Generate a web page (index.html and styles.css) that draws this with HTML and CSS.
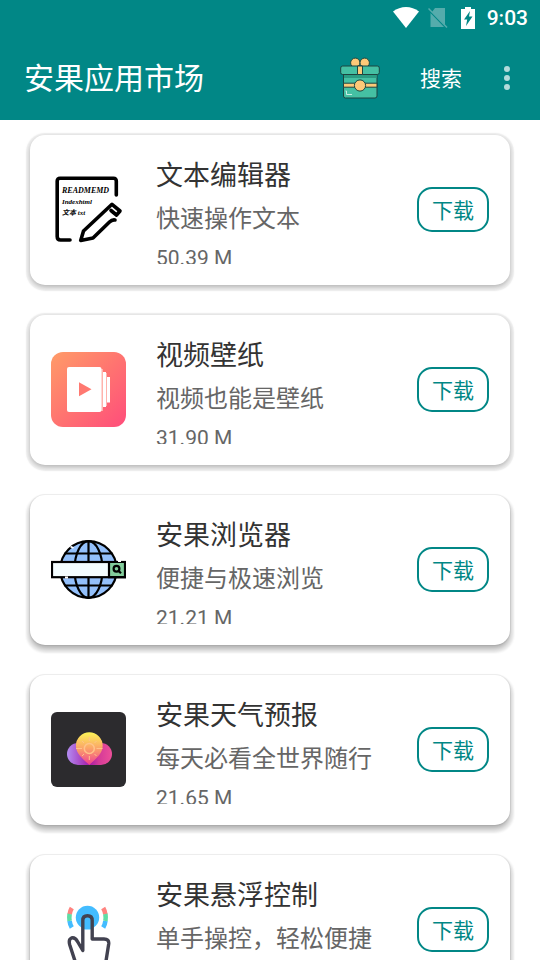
FILE: index.html
```html
<!DOCTYPE html>
<html lang="zh-CN">
<head>
<meta charset="utf-8">
<meta name="viewport" content="width=device-width, initial-scale=1">
<title>安果应用市场</title>
<link rel="stylesheet" href="styles.css">
</head>
<body>
<header class="header">
  <div class="status">
    <svg class="status-wifi" width="26" height="22" viewBox="0 0 26 22"><path d="M0 4.5C7.500-1.500 18.500-1.500 26 4.500L13 21z" fill="#fff"/></svg>
    <svg class="status-sim" width="20" height="22" viewBox="0 0 20 22"><path d="M7 1h10v17L4 5zM2.500 6L16 20H2.500z" fill="#55acac"/><path d="M.5 1.500L19 20.500" stroke="#55acac" stroke-width="1.500"/></svg>
    <svg class="status-battery" width="14" height="22" viewBox="0 0 14 22"><path d="M4 0h6v2h4v20H0V2h4z" fill="#fff"/><path d="M9 4L3 12.500h3.200L5 19 11.500 9.500H8z" fill="#018786"/></svg>
    <span class="clock">9:03</span>
  </div>
  <div class="toolbar">
    <h1 class="app-title">安果应用市场</h1>
    <button class="gift" type="button" aria-label="礼物">
      <svg width="40" height="42" viewBox="0 0 40 42" stroke="#1d4540" stroke-width="1">
        <rect x="3.500" y="16" width="33.500" height="25" rx="2" fill="#45c0a3"/>
        <path d="M4 18h32.500v3H4z" fill="#2a9c83" stroke="none"/>
        <path d="M3.500 26.200H37v4H3.500z" fill="#fdc978"/>
        <circle cx="15.300" cy="5.800" r="4.700" fill="#fdc978"/><circle cx="24.700" cy="5.800" r="4.700" fill="#fdc978"/>
        <rect x=".7" y="9" width="38.600" height="8.500" rx="2" fill="#45c0a3"/>
        <path d="M17.500 9h5v8.500h-5z" fill="#fdc978"/>
        <circle cx="20" cy="28.500" r="5.600" fill="#fdc978"/>
        <path d="M6.500 34v3.500H12M5.500 34h1" fill="none" stroke="#c9efe4"/>
      </svg>
    </button>
    <button class="search" type="button">搜索</button>
    <button class="more" type="button" aria-label="更多">
      <svg width="6" height="24" viewBox="0 0 6 24" fill="#b3dbdb"><circle cx="3" cy="3" r="3"/><circle cx="3" cy="12" r="3"/><circle cx="3" cy="21" r="3"/></svg>
    </button>
  </div>
</header>
<main class="list">
  <article class="card">
    <svg class="icon" viewBox="0 0 75 75">
      <g fill="none" stroke="#000" stroke-width="3.600" stroke-linecap="round" stroke-linejoin="round">
        <path d="M65.300 23V9q0-2.800-2.800-2.800H9Q6.200 6.200 6.200 9v55.500Q6.200 68 9.500 68H19"/>
        <path d="M64 48q-3-.5-5.500 2L42 66l-12.300 2.500L32.500 59 61 32.300 69 39l-3.500 4-5.500-4.500"/>
      </g>
      <g class="icon-script"><text class="icon-script-lead" x="11" y="21">READMEMD</text><text x="11" y="32">Indexhtml</text><text x="11" y="43">文本 txt</text></g>
    </svg>
    <div class="info"><h2 class="name">文本编辑器</h2><p class="desc">快速操作文本</p><p class="size">50.39 M</p></div>
    <button class="download" type="button">下载</button>
  </article>
  <article class="card">
    <svg class="icon" viewBox="0 0 75 75">
      <defs><linearGradient id="coral" x1="0" y1="0" x2="1" y2="1"><stop offset="0" stop-color="#ff9c68"/><stop offset=".5" stop-color="#ff7470"/><stop offset="1" stop-color="#ff4d7b"/></linearGradient></defs>
      <rect width="75" height="75" rx="12" fill="url(#coral)"/>
      <rect x="50" y="17" width="2" height="42" fill="#ffb3ac"/><rect x="54" y="21" width="2" height="33" fill="#ffb3ac"/>
      <rect x="16" y="15" width="34.500" height="45" rx="2" fill="#fff"/>
      <rect x="52" y="20" width="3" height="35" fill="#fff"/><rect x="56" y="25" width="3" height="25.500" fill="#fff"/>
      <path d="M28 30.300L40.500 37.300 28 44.300z" fill="#ff7971"/>
    </svg>
    <div class="info"><h2 class="name">视频壁纸</h2><p class="desc">视频也能是壁纸</p><p class="size">31.90 M</p></div>
    <button class="download" type="button">下载</button>
  </article>
  <article class="card">
    <svg class="icon" viewBox="0 0 75 75">
      <g stroke="#000" stroke-width="2.200" fill="none">
        <circle cx="37.500" cy="37.500" r="28.300" fill="#93c0fb"/>
        <path d="M37.500 9v57M13.500 21.500h48M13.500 53.500h48"/><ellipse cx="37.500" cy="37.500" rx="14" ry="28.300"/>
        <rect x="1" y="30" width="73" height="15.200" fill="#f4fdff"/>
        <path d="M58 30h16v15.200H58z" fill="#83cd9b"/>
        <circle cx="65.500" cy="36.700" r="2.900"/><path d="M67.500 38.700l2.500 2.500"/>
      </g>
      <path d="M19.500 14.500l3 1.500M14 45.500h3M67 29h3" stroke="#fff" stroke-width="1.800"/>
    </svg>
    <div class="info"><h2 class="name">安果浏览器</h2><p class="desc">便捷与极速浏览</p><p class="size">21.21 M</p></div>
    <button class="download" type="button">下载</button>
  </article>
  <article class="card">
    <svg class="icon" viewBox="0 0 75 75">
      <defs>
        <linearGradient id="cloud"><stop offset="0" stop-color="#b38df3"/><stop offset=".5" stop-color="#a31ba8"/><stop offset=".7" stop-color="#d43a98"/><stop offset="1" stop-color="#ed4f99"/></linearGradient>
        <linearGradient id="sunpin" x1="0" y1="0" x2="0" y2="1"><stop offset="0" stop-color="#fcf456"/><stop offset=".5" stop-color="#fba269"/><stop offset="1" stop-color="#f03d91"/></linearGradient>
      </defs>
      <rect width="75" height="75" rx="6" fill="#2c2b2e"/>
      <rect x="16" y="31" width="45" height="22" rx="11" fill="url(#cloud)"/>
      <path d="M38.300 20.300a13.400 13.400 0 0 1 13.400 13.400c0 8-7.400 13.300-13.400 19.300-6-6-13.400-11.300-13.400-19.300a13.400 13.400 0 0 1 13.400-13.400z" fill="url(#sunpin)"/>
      <g fill="none" stroke="#ffc38a"><circle cx="38.300" cy="36.500" r="5" stroke-width="1.500"/><path d="M38.300 25v4M38.300 44v4M25 36.500h6M45.500 36.500h6M31 29l2 2M43.500 42l2 2M45.500 29l-2 2M33 42l-2 2"/></g>
    </svg>
    <div class="info"><h2 class="name">安果天气预报</h2><p class="desc">每天必看全世界随行</p><p class="size">21.65 M</p></div>
    <button class="download" type="button">下载</button>
  </article>
  <article class="card">
    <svg class="icon" viewBox="0 0 75 75">
      <circle cx="36.500" cy="25.500" r="11.700" fill="#43bcff"/>
      <g fill="none" stroke-width="4.600">
        <path d="M20.800 16q-1.800 3-2.200 6.500M52.200 16q1.800 3 2.200 6.500" stroke="#ff837f"/>
        <path d="M18.600 22q-.6 3.500 0 7M54.400 22q.6 3.500 0 7" stroke="#5fdda5"/>
        <path d="M18.600 29q.4 3.500 2.200 6.500M54.400 29q-.4 3.500-2.200 6.500" stroke="#43bcff"/>
      </g>
      <path d="M31.800 57V28.500q0-4.700 4.700-4.700t4.700 4.700V47H53q5.300 0 4.700 5L55 69H24z" fill="#fff"/>
      <path d="M36.500 24q4.700 0 4.700 4.500V37q-4.700 1-9.400 0v-8.500q0-4.500 4.700-4.500z" fill="#43bcff"/>
      <path d="M24 69L18.800 53q-1.600-5.500 1.700-7 3.500-1 6.300 4l5 8.500v-30q0-4.700 4.700-4.700t4.700 4.700V47H53q5.300 0 4.700 5L55 69" fill="none" stroke="#424250" stroke-width="3.400" stroke-linejoin="round"/>
    </svg>
    <div class="info"><h2 class="name">安果悬浮控制</h2><p class="desc">单手操控，轻松便捷</p></div>
    <button class="download" type="button">下载</button>
  </article>
</main>
</body>
</html>
```
FILE: styles.css
```css
* {
  box-sizing: border-box;
}

body {
  margin: 0;
  height: 100vh;
  display: flex;
  flex-direction: column;
  overflow: hidden;
  background: #fff;
  font-family: Roboto, "Noto Sans CJK SC", sans-serif;
}

h1, h2, p {
  margin: 0;
  font-weight: 400;
}

button {
  padding: 0;
  border: 0;
  background: none;
  color: inherit;
  font: inherit;
  cursor: pointer;
}

svg {
  display: block;
}

.header {
  flex: none;
  background: #018786;
  color: #fff;
}

.status {
  display: flex;
  justify-content: flex-end;
  align-items: center;
  height: 36px;
  padding-right: 12px;
}

.status-sim {
  margin-left: 9px;
}

.status-battery {
  margin-left: 13px;
}

.clock {
  margin-left: 12px;
  font-size: 21px;
  font-weight: 500;
  line-height: 36px;
}

.toolbar {
  display: flex;
  align-items: center;
  height: 84px;
  padding: 0 30px 0 24px;
}

.app-title {
  flex: 1;
  padding-top: 2px;
  font-size: 30px;
  line-height: 44px;
}

.search {
  margin-left: 40px;
  padding-top: 2px;
  font-size: 21px;
  line-height: 30px;
}

.more {
  margin-left: 42px;
}

.list {
  flex: 1;
  min-height: 0;
  display: flex;
  flex-direction: column;
  gap: 30px;
  padding: 15px 30px;
  overflow-y: auto;
  scrollbar-width: none;
}

.card {
  flex: none;
  display: flex;
  align-items: flex-start;
  height: 150px;
  padding: 21px;
  border-radius: 15px;
  background: #fff;
  box-shadow: 0 2px 5px rgba(0, 0, 0, 0.26), 0 2px 1px 4px rgba(0, 0, 0, 0.06);
}

/* Shadows fall further for cards lower in the list. */
.card:nth-child(n + 3) {
  box-shadow: 0 4px 5px rgba(0, 0, 0, 0.26), 0 4px 2px 4px rgba(0, 0, 0, 0.06), 0 0 1px 1px rgba(0, 0, 0, 0.06);
}

.icon {
  flex: none;
  width: 75px;
  height: 75px;
  margin: 16px 30px 0 0;
}

.icon-script {
  font: italic 700 7px "Liberation Serif", "Noto Sans CJK SC", serif;
}

.icon-script-lead {
  font-size: 8px;
}

.info {
  flex: 1;
  min-width: 0;
  height: 108px;
  overflow: hidden;
  white-space: nowrap;
}

.name {
  color: #333;
  font-size: 27px;
  line-height: 41px;
}

.desc {
  margin-top: 5px;
  color: #666;
  font-size: 24px;
  line-height: 35px;
}

.size {
  margin-top: 5px;
  color: #666;
  font-size: 21px;
  line-height: 32px;
}

.download {
  flex: none;
  width: 72px;
  height: 45px;
  margin-top: 31px;
  padding-top: 3px;
  border: 2px solid #018786;
  border-radius: 15px;
  color: #018786;
  font-size: 21px;
  line-height: 30px;
}
```
